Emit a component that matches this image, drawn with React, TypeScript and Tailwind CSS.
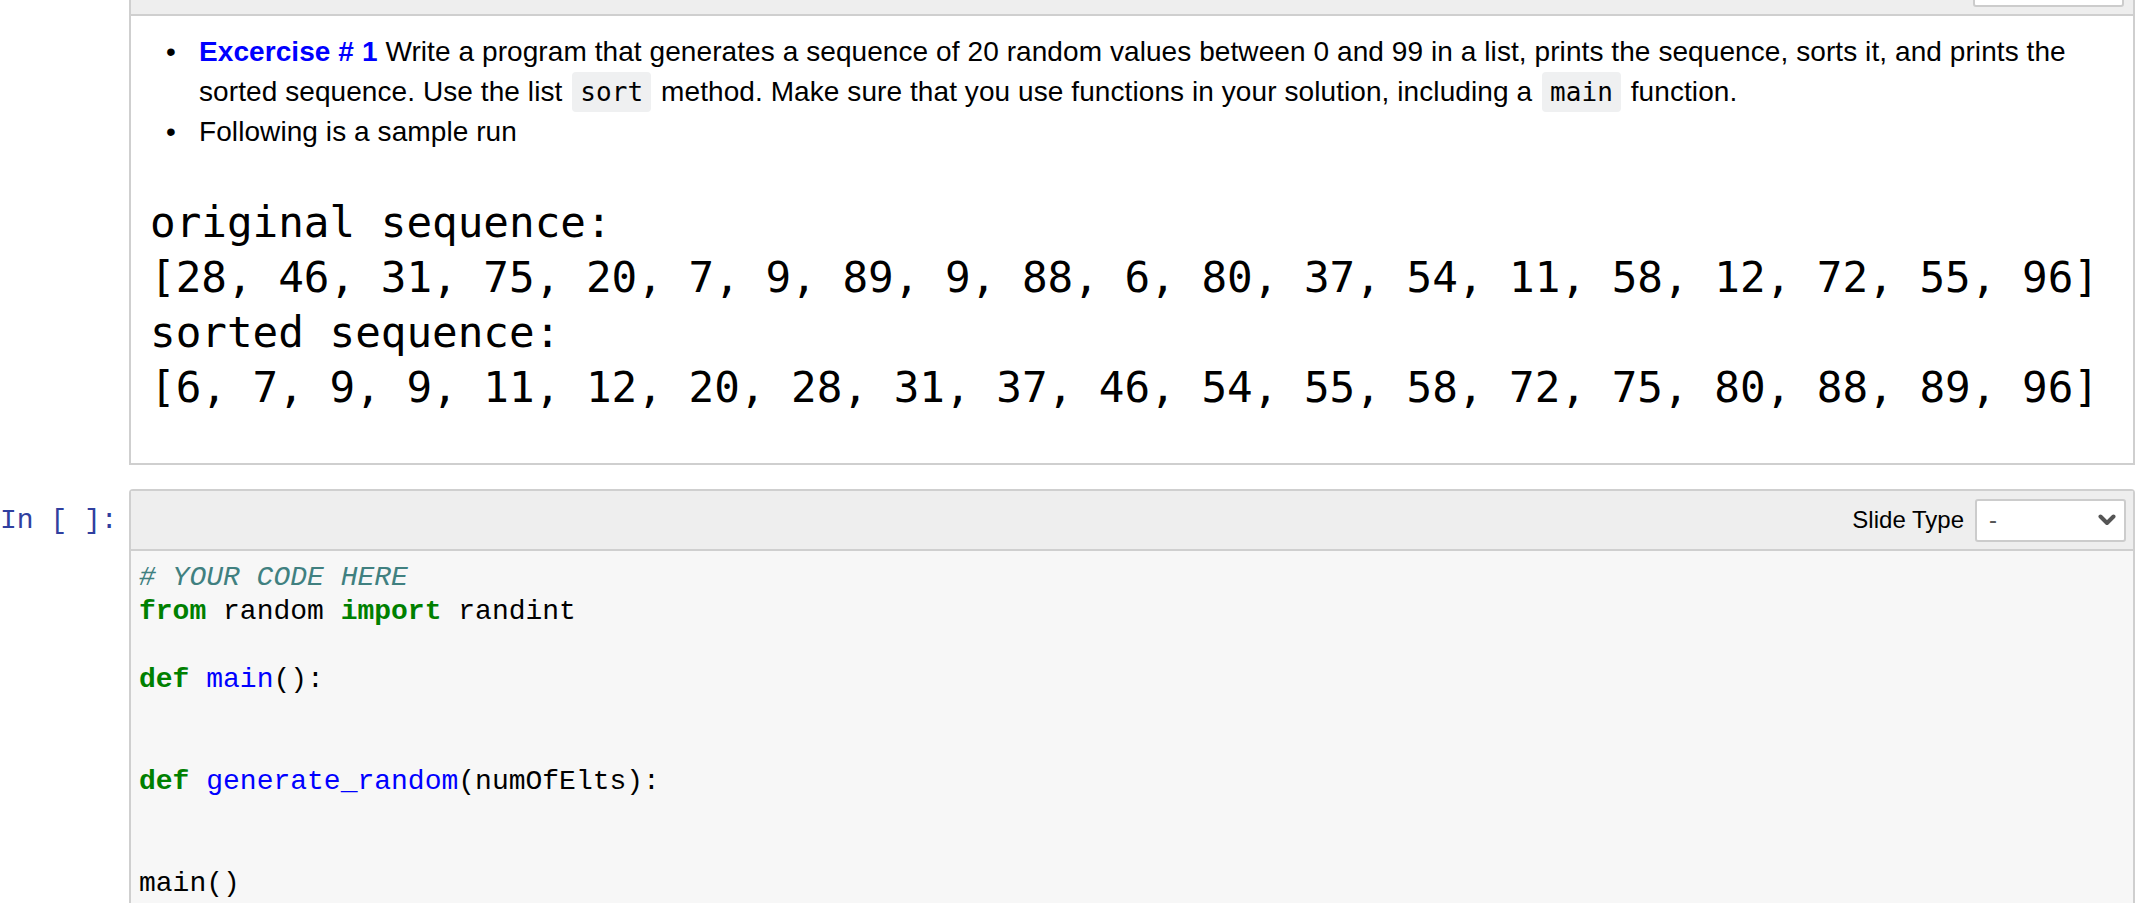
import React from 'react';

const sans = "font-['Liberation_Sans',Arial,sans-serif]";
const mono = "font-['Liberation_Mono','Courier_New',monospace]";

function SelectBox({ value }: { value: string }) {
  return (
    <div className="w-[151px] h-[43px] bg-white border-2 border-[#cccccc] rounded-[3px] flex items-center justify-between pl-[12px] pr-[8px] shrink-0">
      <span className={`${sans} text-[24px] text-[#555555] leading-none`}>{value}</span>
      <svg width="18" height="12" viewBox="0 0 18 12" className="text-[#555555]">
        <path d="M2.5 2.5 L9 9 L15.5 2.5" fill="none" stroke="currentColor" strokeWidth="4" strokeLinecap="round" strokeLinejoin="round" />
      </svg>
    </div>
  );
}

function Code({ children }: { children: React.ReactNode }) {
  return (
    <code className="font-['DejaVu_Sans_Mono',monospace] text-[26px] leading-none bg-[#eff0f1] rounded-[4px] px-[8px] py-[5px] mx-[2px]">
      {children}
    </code>
  );
}

const sampleRun = [
  'original sequence:',
  '[28, 46, 31, 75, 20, 7, 9, 89, 9, 88, 6, 80, 37, 54, 11, 58, 12, 72, 55, 96]',
  'sorted sequence:',
  '[6, 7, 9, 9, 11, 12, 20, 28, 31, 37, 46, 54, 55, 58, 72, 75, 80, 88, 89, 96]',
];

export default function App() {
  return (
    <div className="w-[2152px] h-[903px] overflow-hidden bg-white">
      {/* markdown cell */}
      <div className="flex">
        <div className="w-[129px] shrink-0" />
        <div className="w-[2006px] h-[465px] border-2 border-t-0 border-[#cfcfcf] flex flex-col">
          <div className="h-[16px] bg-[#eeeeee] border-b-2 border-[#cfcfcf] flex items-end justify-end pr-[9px] overflow-visible">
            <div className="mb-[7px]">
              <SelectBox value="" />
            </div>
          </div>
          <div className={`${sans} text-[28px] tracking-[0.08px] leading-[40px] text-black pt-[16px]`}>
            <div className="flex pl-[35px]">
              <span className="w-[33px] shrink-0">•</span>
              <div className="pr-[40px]">
                <span className="text-[#0000ff] font-bold">Excercise # 1</span> Write a program that generates a
                sequence of 20 random values between 0 and 99 in a list, prints the sequence, sorts it, and prints the
                sorted sequence. Use the list <Code>sort</Code> method. Make sure that you use functions in your
                solution, including a <Code>main</Code> function.
              </div>
            </div>
            <div className="flex pl-[35px]">
              <span className="w-[33px] shrink-0">•</span>
              <div>Following is a sample run</div>
            </div>
          </div>
          <div className="pl-[19px] pt-[43px] font-['DejaVu_Sans_Mono',monospace] text-[42.6px] leading-[55px] text-black whitespace-pre">
            {sampleRun.map((line) => (
              <div key={line}>{line}</div>
            ))}
          </div>
        </div>
      </div>

      {/* code cell */}
      <div className="flex mt-[24px]">
        <div className={`w-[129px] shrink-0 pt-[2px] ${mono} text-[28px] leading-[60px] text-[#303f9f] whitespace-pre`}>
          In [ ]:
        </div>
        <div className="w-[2006px] border-2 border-b-0 border-[#cfcfcf] rounded-t-[4px] h-[420px] flex flex-col">
          <div className="h-[60px] bg-[#eeeeee] border-b-2 border-[#cfcfcf] flex items-center justify-end pr-[7px] gap-[11px]">
            <span className={`${sans} text-[24px] text-black`}>Slide Type</span>
            <SelectBox value="-" />
          </div>
          <div className={`flex-1 bg-[#f7f7f7] pt-[10px] pl-[8px] ${mono} text-[28px] leading-[34px] text-black whitespace-pre`}>
            <div className="italic text-[#408080]"># YOUR CODE HERE</div>
            <div>
              <span className="font-bold text-[#008000]">from</span> random <span className="font-bold text-[#008000]">import</span> randint
            </div>
            <div>{' '}</div>
            <div>
              <span className="font-bold text-[#008000]">def</span> <span className="text-[#0000ff]">main</span>():
            </div>
            <div>{' '}</div>
            <div>{' '}</div>
            <div>
              <span className="font-bold text-[#008000]">def</span> <span className="text-[#0000ff]">generate_random</span>(numOfElts):
            </div>
            <div>{' '}</div>
            <div>{' '}</div>
            <div>main()</div>
          </div>
        </div>
      </div>
    </div>
  );
}
